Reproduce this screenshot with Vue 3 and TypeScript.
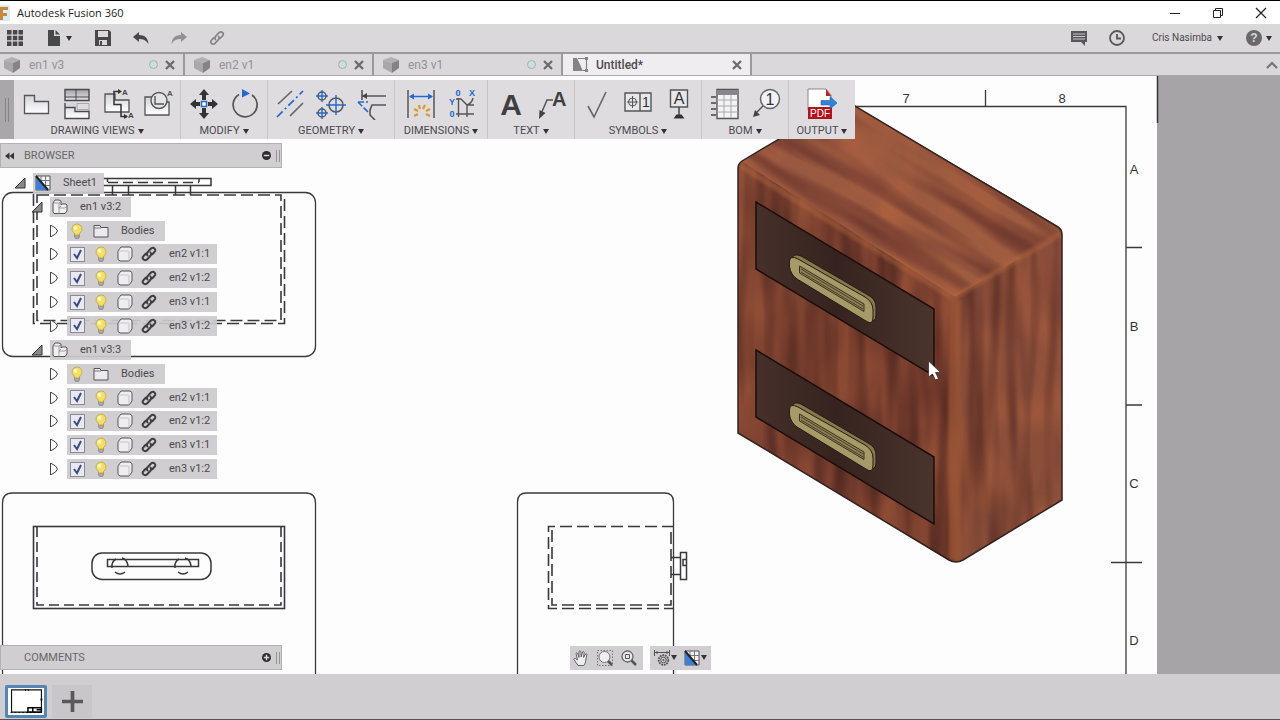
<script setup lang="ts">
import { ref } from 'vue'

interface DocTab { title: string; active: boolean; icon: string }
interface ToolGroup { label: string; tools: { icon: string; name: string }[] }
interface Row { kind: 'sheet' | 'view' | 'bodies' | 'part'; label: string; shown: boolean }

const tabs: DocTab[] = [
  { title: 'en1 v3', active: false, icon: 'cube' },
  { title: 'en2 v1', active: false, icon: 'cube' },
  { title: 'en3 v1', active: false, icon: 'cube' },
  { title: 'Untitled*', active: true, icon: 'drawing' },
]

const groups: ToolGroup[] = [
  { label: 'DRAWING VIEWS', tools: [
    { icon: 'base', name: 'Base view' }, { icon: 'projected', name: 'Projected view' },
    { icon: 'section', name: 'Section view' }, { icon: 'detail', name: 'Detail view' }] },
  { label: 'MODIFY', tools: [{ icon: 'move', name: 'Move' }, { icon: 'rotate', name: 'Rotate' }] },
  { label: 'GEOMETRY', tools: [
    { icon: 'centerline', name: 'Centerline' }, { icon: 'centermark', name: 'Center mark' },
    { icon: 'extension', name: 'Edge extension' }] },
  { label: 'DIMENSIONS', tools: [{ icon: 'dimension', name: 'Dimension' }, { icon: 'ordinate', name: 'Ordinate' }] },
  { label: 'TEXT', tools: [{ icon: 'text', name: 'Text' }, { icon: 'leader', name: 'Leader' }] },
  { label: 'SYMBOLS', tools: [
    { icon: 'surface', name: 'Surface texture' }, { icon: 'control', name: 'Feature control frame' },
    { icon: 'datum', name: 'Datum identifier' }] },
  { label: 'BOM', tools: [{ icon: 'table', name: 'Parts list' }, { icon: 'balloon', name: 'Balloon' }] },
  { label: 'OUTPUT', tools: [{ icon: 'pdf', name: 'Output PDF' }] },
]

const part = (label: string): Row => ({ kind: 'part', label, shown: true })
const viewRows = (label: string): Row[] => [
  { kind: 'view', label, shown: true },
  { kind: 'bodies', label: 'Bodies', shown: true },
  part('en2 v1:1'), part('en2 v1:2'), part('en3 v1:1'), part('en3 v1:2'),
]
const rows = ref<Row[]>([
  { kind: 'sheet', label: 'Sheet1', shown: true },
  ...viewRows('en1 v3:2'),
  ...viewRows('en1 v3:3'),
])
const rowIcons: Record<Row['kind'], string[]> = {
  sheet: ['sheet'],
  view: ['component'],
  bodies: ['bulb', 'folder'],
  part: ['bulb', 'body', 'chain'],
}
const zoneLetters = ['A', 'B', 'C', 'D']
</script>

<template>
  <div class="app">
    <svg class="defs" aria-hidden="true">
      <symbol id="i-cube" viewBox="0 0 16 16"><path d="M0 3L8 0l8 3-7 3z" fill="#b2b0b2" /><path d="M0 3l9 3v10L0 11z" fill="#a9a7a9" /><path d="M16 3v8l-7 5V6z" fill="#858386" /></symbol>
      <symbol id="i-drawing" viewBox="0 0 16 16"><path d="M1 1h4l6 13H1z" fill="#858386" /><path d="M6 1.500h8.500v12H11" fill="none" stroke="#858386" stroke-width="1.200" /><path d="M13 0h3v3h-3zM13 12h3v3h-3z" fill="#858386" /></symbol>
      <symbol id="i-base" viewBox="0 0 32 32"><path d="M4.500 7.500h10v6h14v12h-24z" fill="url(#metal)" stroke="#555" stroke-width="1.300" /></symbol>
      <symbol id="i-projected" viewBox="0 0 32 32"><path d="M4 1.500h24v11H4z" fill="url(#metalDark)" stroke="#4a494c" stroke-width="1.400" /><path d="M15 1v12M4 9h24" stroke="#4a494c" /><path d="M4 15.500h24v15H4z" fill="url(#metal)" /><path d="M4 15v15.500h24V22.500M4 19.500h10v4h14" fill="none" stroke="#4a494c" stroke-width="1.400" /><path d="M16 15.500h12v6H16z" fill="#dedcdf" stroke="#aaa" /></symbol>
      <symbol id="i-section" viewBox="0 0 32 32"><path d="M3 6h10v6h14v12H3z" fill="url(#metal)" stroke="#555" stroke-width="1.300" /><path d="M17 3.500h-5v13h7v12h6" fill="none" stroke="#333" stroke-width="1.500" /><path d="M16 1l4 2.500-4 2.500zM22 26l4 2.500-4 2.500z" fill="#333" /><text x="20" y="7" font-size="8" font-weight="bold" fill="#444">A</text><text x="26" y="30" font-size="8" font-weight="bold" fill="#444">A</text></symbol>
      <symbol id="i-detail" viewBox="0 0 32 32"><path d="M2 9h10v5h14v13H2z" fill="url(#metal)" stroke="#555" stroke-width="1.300" /><circle cx="16" cy="12.500" r="8" fill="#e4e3e6" stroke="#555" stroke-width="1.400" /><path d="M12 8v8h9" fill="none" stroke="#555" stroke-width="1.400" /><text x="24" y="8" font-size="8" font-weight="bold" fill="#555">A</text></symbol>
      <symbol id="i-move" viewBox="0 0 32 32"><path d="M16 1l5 6h-3v5h-4V7h-3zM16 31l-5-6h3v-5h4v5h3zM2 16l6-5v3h4v4H8v3zM30 16l-6 5v-3h-4v-4h4v-3z" fill="#333" /><path d="M13.500 13.500h5v5h-5z" fill="#fff" stroke="#2a6bc4" stroke-width="1.600" /></symbol>
      <symbol id="i-rotate" viewBox="0 0 32 32"><path d="M10 6.500A12 12 0 1 0 23 7" fill="none" stroke="#555" stroke-width="1.700" /><path d="M13 1l8 4.500-8 4z" fill="#2468cf" /></symbol>
      <symbol id="i-centerline" viewBox="0 0 32 32"><path d="M4 16L18 3M16 28l13-13" stroke="#666" stroke-width="1.700" /><path d="M3 29L29 3" stroke="#2468cf" stroke-width="1.700" stroke-dasharray="8 3 2 3" /></symbol>
      <symbol id="i-centermark" viewBox="0 0 32 32"><g fill="none" stroke="#555" stroke-width="1.500"><circle cx="7" cy="8" r="4" /><circle cx="7" cy="25" r="4" /><circle cx="21" cy="17" r="7" /></g><path d="M7 2v12M1 8h12M7 19v12M1 25h12M21 7v20M11 17h20" stroke="#2468cf" stroke-width="1.400" /></symbol>
      <symbol id="i-extension" viewBox="0 0 32 32"><path d="M6 2v10M6 8h24M30 17H16l-2 5v5l5 5" fill="none" stroke="#555" stroke-width="1.600" /><path d="M11 5v6L6 8z" fill="#444" /><path d="M2 14l10 10M2 14h10" fill="none" stroke="#2468cf" stroke-width="1.600" stroke-dasharray="6 2" /></symbol>
      <symbol id="i-dimension" viewBox="0 0 32 32"><path d="M3 2v28M29 2v28" stroke="#555" stroke-width="1.500" /><path d="M5 8.500h22" stroke="#2468cf" stroke-width="1.500" /><path d="M4 8.500l5-3v6zM28 8.500l-5-3v6z" fill="#2468cf" /><path d="M9 28l4-2M9 21l4 2M14 17l1 4M20 17l-2 4M25 21l-4 2M25 28l-4-2" stroke="#d99a2b" stroke-width="2.200" /></symbol>
      <symbol id="i-ordinate" viewBox="0 0 32 32"><path d="M12.500 10v19M10 26h18M10 11h5l6 6h7M27 10q-1 5-6 7v12" fill="none" stroke="#555" stroke-width="1.400" /><g font-size="9" font-weight="bold" fill="#2468cf" text-anchor="middle"><text x="12" y="8">0</text><text x="26" y="8">X</text><text x="6" y="17">Y</text><text x="6" y="29">0</text></g></symbol>
      <symbol id="i-text" viewBox="0 0 32 32"><text x="16" y="27" font-size="30" font-weight="bold" text-anchor="middle" fill="#3f3e41">A</text></symbol>
      <symbol id="i-leader" viewBox="0 0 32 32"><text x="16" y="18" font-size="20" font-weight="bold" fill="#3f3e41">A</text><path d="M17 12h-6L5 26" fill="none" stroke="#555" stroke-width="1.500" /><path d="M3 31l.5-9 6 3z" fill="#444" /></symbol>
      <symbol id="i-surface" viewBox="0 0 32 32"><path d="M7 18l6 11L25 4" fill="none" stroke="#666" stroke-width="1.600" /></symbol>
      <symbol id="i-control" viewBox="0 0 32 32"><path d="M3 5h26v18H3zM18 5v18" fill="#e8e7e9" stroke="#555" stroke-width="1.400" /><circle cx="10.500" cy="14" r="4" fill="none" stroke="#555" /><path d="M5 14h11M10.500 8v12" stroke="#555" /><text x="20" y="19" font-size="14" fill="#333">1</text></symbol>
      <symbol id="i-datum" viewBox="0 0 32 32"><path d="M7.500 2h17v17h-17z" fill="#e8e7e9" stroke="#555" stroke-width="1.400" /><text x="16" y="16" font-size="16" text-anchor="middle" fill="#333">A</text><path d="M16 19v8" stroke="#444" stroke-width="1.500" /><path d="M10.500 30.500l3-4h5l3 4z" fill="#333" /></symbol>
      <symbol id="i-table" viewBox="0 0 32 32"><path d="M8 1.500h21v29H8z" fill="#f4f3f5" stroke="#555" stroke-width="1.400" /><path d="M8 2h21v5H8z" fill="#88868c" /><path d="M15 7v23M22 7v23M8 12h21M8 18h21M8 24h21" stroke="#aaa8b0" /><path d="M2 9h5M2 15h5M2 21h5M2 27h5" stroke="#444" stroke-width="1.400" /></symbol>
      <symbol id="i-balloon" viewBox="0 0 32 32"><circle cx="20" cy="11" r="9.500" fill="#f2f1f3" stroke="#666" stroke-width="1.500" /><text x="20" y="17" font-size="16" text-anchor="middle" fill="#333">1</text><path d="M13 18l-7 7" stroke="#555" stroke-width="1.500" /><path d="M3 29l2-7 5 5z" fill="#444" /></symbol>
      <symbol id="i-pdf" viewBox="0 0 32 32"><path d="M2 1h18l5 6v15H2z" fill="#fff" stroke="#888" /><path d="M20 1l5 7h-5z" fill="#b8202a" /><path d="M2 19h24v12H2z" fill="#b5121b" /><path d="M15 12.500h9V8.500l7 6.500-7 6v-4h-9z" fill="#2e84dc" stroke="#1c5ea8" stroke-width=".6" /><text x="14" y="29" font-size="10" text-anchor="middle" fill="#fff">PDF</text></symbol>
      <symbol id="i-sheet" viewBox="0 0 16 16"><path d="M1 1h14v14H1z" fill="#f3f3f5" stroke="#555" /><path d="M6 1v14M10.500 1v14M1 5.500h14M1 10.500h14" stroke="#777" /><path d="M1 1l12 14H1z" fill="#3b7fd6" /><path d="M1 1l12 14" stroke="#222" stroke-width="2" /></symbol>
      <symbol id="i-component" viewBox="0 0 16 16"><path d="M1 4l2-3h4l2 1v4l1-1h4l1 1v6l-2 2.500H2L1 13z" fill="#f0eff1" stroke="#555" stroke-linejoin="round" /><path d="M7 15V9l2-2M1.500 4H7l2-2M7 4v5h6l2-2" fill="none" stroke="#8b898d" stroke-width=".8" /></symbol>
      <symbol id="i-bulb" viewBox="0 0 16 16"><path d="M5.500 10h5v4l-1.500 2H7l-1.500-2z" fill="#aaa7a2" stroke="#777" stroke-width=".6" /><path d="M8 1a5 5 0 0 0-3 9l1 2h4l1-2a5 5 0 0 0-3-9z" fill="#f4df62" stroke="#b19c3c" stroke-width=".7" /><circle cx="6.500" cy="5" r="2" fill="#fff8bd" /></symbol>
      <symbol id="i-folder" viewBox="0 0 16 16"><path d="M1 14V2.500h6l1 2h7V14z" fill="#eceaee" stroke="#555" /><path d="M1 5h7" stroke="#777" /></symbol>
      <symbol id="i-body" viewBox="0 0 16 16"><path d="M1 5l3-4h9l2 1.500V11l-3 4H3l-2-1.500z" fill="#efedf1" stroke="#555" /><path d="M1.500 5H11q1 0 1 1v8.500" fill="none" stroke="#c5c3c8" /></symbol>
      <symbol id="i-chain" viewBox="0 0 16 16"><g fill="none" stroke="#3f3e41" stroke-width="2" stroke-linecap="round"><path d="M6.500 9.500Q5 7.500 7 5.800L10 2.600Q12 1 13.600 2.600T13.400 6L11.300 8.200" /><path d="M9.500 6.500Q11 8.500 9 10.200L6 13.400Q4 15 2.400 13.400T2.600 10L4.700 7.800" /></g></symbol>
      <symbol id="i-link" viewBox="0 0 16 16"><g fill="none" stroke="#858386" stroke-width="1.700" stroke-linecap="round"><path d="M6.500 9.500Q5 7.500 7 5.800L10 2.600Q12 1 13.600 2.600T13.400 6L11.300 8.200" /><path d="M9.500 6.500Q11 8.500 9 10.200L6 13.400Q4 15 2.400 13.400T2.600 10L4.700 7.800" /></g></symbol>
      <symbol id="i-apps" viewBox="0 0 16 16"><path d="M0 0h4.500v4.500H0zM5.800 0h4.500v4.500H5.800zM11.500 0H16v4.500h-4.500zM0 5.800h4.500v4.500H0zM5.800 5.800h4.500v4.500H5.800zM11.500 5.800H16v4.500h-4.500zM0 11.500h4.500V16H0zM5.800 11.500h4.500V16H5.800zM11.500 11.500H16V16h-4.500z" fill="#48474a" /></symbol>
      <symbol id="i-file" viewBox="0 0 16 16"><path d="M2 0h6v6h6v10H2zM9.500 0L14 4.500H9.500z" fill="#48474a" /></symbol>
      <symbol id="i-save" viewBox="0 0 16 16"><path d="M0 0h14l2 2v14H0z" fill="#48474a" /><path d="M3 1h10v6H3zM4 10h8v5H4z" fill="#dad8db" /><path d="M5 11h2v4H5z" fill="#48474a" /></symbol>
      <symbol id="i-undo" viewBox="0 0 16 16"><path d="M0 7l6-5v3c7 0 9 4 9.500 9C13 10 10 9 6 9v3z" fill="#48474a" /></symbol>
      <symbol id="i-redo" viewBox="0 0 16 16"><path d="M16 7l-6-5v3C3 5 1 9 .5 14 3 10 6 9 10 9v3z" fill="#929094" /></symbol>
      <symbol id="i-comment" viewBox="0 0 16 16"><path d="M0 1h16v11h-2v4l-4-4H0z" fill="#59575b" /><path d="M2 4h12M2 6.500h12M2 9h12" stroke="#c9c7ca" /></symbol>
      <symbol id="i-clock" viewBox="0 0 16 16"><circle cx="8" cy="8" r="7" fill="none" stroke="#59575b" stroke-width="1.800" /><path d="M8 4v4.500h4" fill="none" stroke="#59575b" stroke-width="1.800" /></symbol>
      <symbol id="i-help" viewBox="0 0 16 16"><circle cx="8" cy="8" r="8" fill="#6a686c" /><text x="8" y="12" font-size="12" font-weight="bold" text-anchor="middle" fill="#dad8db">?</text></symbol>
      <symbol id="i-pan" viewBox="0 0 16 16"><path d="M5 15.500L1 9.500q0-1.500 1.500-1L4.500 10 3 3.500q.8-1.500 1.700 0L6 7.500 6 1.500q1-1.500 1.800 0L8.200 7 9.500 2q1.200-1 1.600.3L10.600 7.500 12.500 4q1.300-.7 1.400.5L12.800 10q0 3-2 5.500z" fill="#eeedef" stroke="#555" stroke-width=".9" /></symbol>
      <symbol id="i-zoomwin" viewBox="0 0 16 16"><path d="M.5.500h15v15H.5z" fill="none" stroke="#777" stroke-dasharray="1.500 1.500" /><circle cx="7.500" cy="7" r="5.500" fill="#efeef0" stroke="#777" /><path d="M11 11l4 4" stroke="#555" stroke-width="2.500" /></symbol>
      <symbol id="i-zoomfit" viewBox="0 0 16 16"><circle cx="6.500" cy="6.500" r="5.500" fill="#e8e7e9" stroke="#666" stroke-width="1.300" /><path d="M4.500 4.500h4v4h-4z" fill="none" stroke="#555" /><path d="M10.500 10.500l4.500 4.500" stroke="#555" stroke-width="2.500" /></symbol>
      <symbol id="i-settings" viewBox="0 0 16 16"><path d="M.5 0v6M15.500 0v6M1 2.500h14M3 1v3M13 1v3" fill="none" stroke="#555" /><circle cx="9.500" cy="10" r="4.800" fill="#d0ced0" stroke="#555" stroke-width="1.800" stroke-dasharray="1.800 .8" /><circle cx="9.500" cy="10" r="2.800" fill="none" stroke="#555" /><circle cx="9.500" cy="10" r="1" fill="#555" /></symbol>
    </svg>

    <header class="titlebar">
      <svg class="brand" viewBox="0 0 10 16" aria-hidden="true"><path d="M0 0h10v16H0z" fill="#dcecf5" /><path d="M0 2h8v3H3v3h4v3H3v4H0z" fill="#c8873c" /></svg>
      <h1>Autodesk Fusion 360</h1>
      <div class="window-buttons">
        <button aria-label="Minimize"><svg viewBox="0 0 12 12"><path d="M1 6.500h10" stroke="#222" /></svg></button>
        <button aria-label="Restore"><svg viewBox="0 0 12 12"><path d="M1.500 3.500h7v7h-7zM3.500 3V1.500h7v7H9" fill="none" stroke="#222" /></svg></button>
        <button aria-label="Close"><svg viewBox="0 0 12 12"><path d="M1 1l10 10M11 1L1 11" stroke="#222" stroke-width="1.200" /></svg></button>
      </div>
    </header>

    <nav class="quickbar" aria-label="Quick access">
      <button aria-label="Data panel"><svg><use href="#i-apps" /></svg></button>
      <button class="file" aria-label="File"><svg><use href="#i-file" /></svg><i class="caret"></i></button>
      <button aria-label="Save"><svg><use href="#i-save" /></svg></button>
      <button aria-label="Undo"><svg><use href="#i-undo" /></svg></button>
      <button aria-label="Redo"><svg><use href="#i-redo" /></svg></button>
      <button aria-label="Link"><svg><use href="#i-link" /></svg></button>
      <div class="account">
        <button aria-label="Comments"><svg><use href="#i-comment" /></svg></button>
        <button aria-label="Job status"><svg><use href="#i-clock" /></svg></button>
        <button class="user">Cris Nasimba<i class="caret"></i></button>
        <button class="help" aria-label="Help"><svg><use href="#i-help" /></svg><i class="caret"></i></button>
      </div>
    </nav>

    <nav class="tabs" aria-label="Documents">
      <div v-for="t in tabs" :key="t.title" class="tab" :class="{ active: t.active }">
        <button class="tab-name"><svg><use :href="'#i-' + t.icon" /></svg>{{ t.title }}</button>
        <i v-if="!t.active" class="ring"></i>
        <button class="close" :aria-label="'Close ' + t.title"><svg viewBox="0 0 10 10"><path d="M1 1l8 8M9 1L1 9" stroke="#6d6b6f" stroke-width="2.400" /></svg></button>
      </div>
      <button class="collapse" aria-label="Collapse toolbar"><svg viewBox="0 0 12 8"><path d="M1 7l5-5 5 5" fill="none" stroke="#77757a" stroke-width="2.200" /></svg></button>
    </nav>

    <main class="workspace">
      <svg class="drawing" viewBox="0 76 1280 598" preserveAspectRatio="xMinYMin slice" aria-label="Drawing sheet">
        <defs>
          <linearGradient id="metal" x1="0" y1="0" x2="0" y2="1"><stop offset="0" stop-color="#d3d2da" /><stop offset="1" stop-color="#fff" /></linearGradient>
          <linearGradient id="metalDark" x1="0" y1="0" x2="0" y2="1"><stop offset="0" stop-color="#a3a2ab" /><stop offset="1" stop-color="#e7e6ea" /></linearGradient>
          <filter id="grainV" x="0" y="0" width="1" height="1" color-interpolation-filters="sRGB"><feTurbulence type="fractalNoise" baseFrequency=".06 .006" numOctaves="2" seed="8" /><feColorMatrix values="0 0 0 0 .26  0 0 0 0 .12  0 0 0 0 .11  1.700 0 0 0 -.65" /></filter>
          <filter id="grainT" x="0" y="0" width="1" height="1" color-interpolation-filters="sRGB"><feTurbulence type="fractalNoise" baseFrequency=".006 .06" numOctaves="2" seed="4" /><feColorMatrix values="0 0 0 0 .38  0 0 0 0 .18  0 0 0 0 .16  1.700 0 0 0 -.65" /></filter>
          <filter id="cloud" x="0" y="0" width="1" height="1" color-interpolation-filters="sRGB"><feTurbulence type="fractalNoise" baseFrequency=".024 .014" numOctaves="2" seed="21" /><feColorMatrix values="0 0 0 0 .7  0 0 0 0 .39  0 0 0 0 .25  0 2.200 0 0 -.85" /></filter>
          <linearGradient id="front" x1="0" y1="0" x2="1" y2="1"><stop offset="0" stop-color="#8c4c36" /><stop offset=".5" stop-color="#783e2e" /><stop offset="1" stop-color="#844632" /></linearGradient>
          <linearGradient id="top" x1="0" y1="0" x2="1" y2="1"><stop offset="0" stop-color="#975640" /><stop offset="1" stop-color="#a05e40" /></linearGradient>
          <linearGradient id="side" x1="0" y1="0" x2="0" y2="1"><stop offset="0" stop-color="#8a4d3b" /><stop offset="1" stop-color="#8b4f39" /></linearGradient>
          <linearGradient id="drawerFill"><stop offset="0" stop-color="#45302a" /><stop offset=".45" stop-color="#36231f" /><stop offset="1" stop-color="#4a342d" /></linearGradient>
          <filter id="soft"><feGaussianBlur stdDeviation="1.500" /></filter>
          <clipPath id="cFront"><path d="M738 168q0-6 6-5L955 297v265q-4 0-8-3L738 433z" /></clipPath>
          <clipPath id="cTop"><path d="M740 163L845 100 1058 226q6 4 3 8L962 297q-6 4-12 0z" /></clipPath>
          <clipPath id="cSide"><path d="M955 297L1062 233v267L963 560q-4 2-8 2z" /></clipPath>
          <g id="handle">
            <path d="M792 258L792 264Q794 272 800 276L868 320Q876 323 876 315L876 307Q876 299 868 295L801 256Q794 253 792 258z" fill="#86784c" stroke="#241b12" />
            <path d="M789.500 261L789.500 267Q791 275 797 279L866 321Q873 326 873 317L873 310Q873 302 865 297L798 259Q790 255 789.500 261z" fill="#a59a68" stroke="#241b12" />
            <path d="M799.500 266L864 304V311.500L799.500 273z" fill="#8d8256" stroke="#3b301e" />
            <path d="M801 269L863 306M801 272L863 309" stroke="#4a3e28" />
          </g>
          <path id="drawer" d="M756 202L934 309V376L756 269z" />
        </defs>

        <rect x="0" y="76" width="1157" height="598" fill="#fefdfe" />
        <path d="M1157.500 76v47" stroke="#333" stroke-width="1.500" />
        <g fill="none" stroke="#3a393b" stroke-width="1.300">
          <path d="M855 106.500h271V674M985.500 90v16M1126 247.500h16M1126 405h16M1111 562.500h31" />
        </g>
        <g class="zones">
          <text x="906" y="103">7</text><text x="1062" y="103">8</text>
          <text v-for="(z, i) in zoneLetters" :key="z" x="1134" :y="174 + i * 157">{{ z }}</text>
        </g>

        <g fill="none" stroke="#39383a" stroke-width="1.300">
          <rect x="2.500" y="192.500" width="313" height="164" rx="10" />
          <path d="M2.500 674V503q0-10 10-10h293q10 0 10 10v171M517.500 674V502q0-9 9-9h138q9 0 9 9v172" />
          <path d="M103 178.500h108v7H103M112.500 186v9M128.500 186v9M175.500 186v9M190.500 186v9" stroke-width="1.500" />
          <path d="M107.500 178v4M199 178v4M108 182.500h91" stroke-dasharray="10 5" stroke-width="1.500" />
          <g stroke-width="1.600" stroke-dasharray="12 5">
            <path d="M33.500 194v129.500h251V194M37 195h244v125.500H37z" />
            <path d="M37 527v78h244v-78" stroke-dasharray="10 5" />
            <path d="M674 526.500H548.500v82H674M552 530v75h119V527" />
          </g>
          <rect x="33.500" y="526.500" width="251" height="82" stroke-width="1.600" />
          <rect x="92" y="553" width="119" height="26.500" rx="10" stroke-width="1.500" />
          <path d="M107.500 559.500h91v7h-91zM671 557.500h9M671 574.500h9M680.500 552.500h6v27h-6zM686 559.500h-3v6h3" stroke-width="1.500" />
          <path v-for="x in [120, 183]" :key="x" :d="`M${x - 8} 568q-1-6 4-9M${x + 2} 558q5 1 6 8M${x - 5} 572q5 4 10 0`" stroke-width="1.500" />
        </g>

        <g clip-path="url(#cTop)"><rect x="730" y="90" width="340" height="215" fill="url(#top)" /><rect x="730" y="90" width="340" height="215" filter="url(#cloud)" opacity=".7" /><g transform="rotate(31 740 90)"><rect x="640" y="-80" width="520" height="440" filter="url(#grainT)" /></g></g>
        <g clip-path="url(#cFront)"><rect x="738" y="155" width="217" height="410" fill="url(#front)" /><rect x="738" y="155" width="217" height="410" filter="url(#cloud)" opacity=".6" /><rect x="738" y="155" width="217" height="410" filter="url(#grainV)" /></g>
        <g clip-path="url(#cSide)"><rect x="950" y="225" width="115" height="340" fill="url(#side)" /><rect x="950" y="225" width="115" height="340" filter="url(#cloud)" opacity=".7" /><rect x="950" y="225" width="115" height="340" filter="url(#grainV)" /></g>
        <path d="M741 166L953 298L1060 234" fill="none" stroke="#b3673f" stroke-width="6" opacity=".45" filter="url(#soft)" />
        <path d="M949 300h12v257q-6 5-12 1z" fill="#9c5736" opacity=".7" filter="url(#soft)" />
        <path d="M738 168q0-4 4-7L845 100 1058 227q4 3 4 7v266L963 560q-7 4-14 0L738 433z" fill="none" stroke="#302220" stroke-width="1.500" />
        <g stroke="#1d0d0a" stroke-width="1.500" fill="url(#drawerFill)"><use href="#drawer" /><use href="#drawer" transform="translate(0 148)" /></g>
        <use href="#handle" /><use href="#handle" transform="translate(0 148)" />
        <path d="M928.500 361v16l4-3 3 6 3-1.500-3-6h5z" fill="#fff" stroke="#333" stroke-width=".8" />
      </svg>

      <section class="toolbar" aria-label="Tools">
        <div class="grip"></div>
        <div v-for="g in groups" :key="g.label" class="group">
          <div class="tools">
            <button v-for="tool in g.tools" :key="tool.icon" :aria-label="tool.name"><svg><use :href="'#i-' + tool.icon" /></svg></button>
          </div>
          <button class="group-label">{{ g.label }}<i class="caret"></i></button>
        </div>
      </section>

      <section class="panel browser-head">
        <button class="rewind" aria-label="Hide browser"><svg viewBox="0 0 10 8"><path d="M5 0v8L0 4zM10 0v8L5 4z" fill="#333" /></svg></button>
        <h2>BROWSER</h2>
        <button class="toggle" aria-label="Collapse browser"><svg viewBox="0 0 10 10"><circle cx="5" cy="5" r="5" fill="#2d2c2e" /><path d="M2 5h6" stroke="#ddd" stroke-width="1.600" /></svg></button>
        <i class="bars"></i>
      </section>

      <ul class="tree">
        <li v-for="(r, i) in rows" :key="i" :class="r.kind">
          <button class="expander" :aria-label="'Expand ' + r.label">
            <svg v-if="r.kind === 'sheet' || r.kind === 'view'" viewBox="0 0 12 12"><path d="M11 1v10H1z" fill="#8b898c" stroke="#333" /></svg>
            <svg v-else viewBox="0 0 12 12"><path d="M2.500 0v12Q9 9 9.500 6 9 3 2.500 0z" fill="#fbfafb" stroke="#444" /></svg>
          </button>
          <label class="chip">
            <span v-if="r.kind === 'part'" class="cell"><input v-model="r.shown" type="checkbox" /></span>
            <span v-for="ic in rowIcons[r.kind]" :key="ic" class="cell"><svg><use :href="'#i-' + ic" /></svg></span>
            <span class="name">{{ r.label }}</span>
          </label>
        </li>
      </ul>

      <div class="foot">
        <section class="panel">
          <h2>COMMENTS</h2>
          <button class="toggle" aria-label="Add comment"><svg viewBox="0 0 10 10"><circle cx="5" cy="5" r="5" fill="#2d2c2e" /><path d="M2 5h6M5 2v6" stroke="#ddd" stroke-width="1.600" /></svg></button>
          <i class="bars"></i>
        </section>
        <div class="viewbar">
          <button aria-label="Pan"><svg><use href="#i-pan" /></svg></button>
          <button aria-label="Zoom window"><svg><use href="#i-zoomwin" /></svg></button>
          <button aria-label="Fit"><svg><use href="#i-zoomfit" /></svg></button>
        </div>
        <div class="viewbar settings">
          <button aria-label="Annotation settings"><svg><use href="#i-settings" /></svg><i class="caret"></i></button>
          <button aria-label="Sheet settings"><svg><use href="#i-sheet" /></svg><i class="caret"></i></button>
        </div>
      </div>
    </main>

    <footer class="sheets">
      <button class="thumb" aria-label="Sheet1"><svg viewBox="0 0 34 28"><path d="M0 0h34v28H0z" fill="#fff" /><path d="M2 2h31v23H2z" fill="none" stroke="#111" stroke-width="1.200" /><path d="M1 25.500h32" stroke="#111" stroke-dasharray="2 2" /><path d="M19 20.500h14v4.500H19zM24 20.500v4.500M28 22.500h5" fill="none" stroke="#000" stroke-width="1.500" /><path d="M16 2h1M19 2h1M32 12h2" stroke="#111" stroke-width="2" /></svg></button>
      <button class="add" aria-label="Add sheet"><svg viewBox="0 0 20 20"><path d="M0 10h20M10 0v20" stroke="#59585b" stroke-width="3.500" /></svg></button>
    </footer>
  </div>
</template>

<style>
body { margin: 0; }
</style>

<style scoped>
* { box-sizing: border-box; }
.app {
  display: flex; flex-direction: column; height: 100vh; overflow: hidden;
  border-top: 1px solid #000; border-bottom: 1px solid #555357;
  font: 11px/16px Roboto, "Liberation Sans", sans-serif; color: #4c4a4e; background: #d0ced0;
}
.defs { display: none; }
button { display: flex; align-items: center; justify-content: center; padding: 0; border: 0; background: none; font: inherit; color: inherit; }
button svg, .cell svg { display: block; width: 16px; height: 16px; }
symbol text { font-family: "Liberation Sans", sans-serif; }
h1, h2 { margin: 0; font-weight: normal; }
.caret { flex: none; border: 3px solid transparent; border-top: 5px solid #333; border-bottom: 0; }

.titlebar { display: flex; align-items: center; flex: none; height: 23px; background: #fff; }
.brand { width: 10px; height: 16px; }
h1 { margin-left: 7px; font: 11px/18px "Open Sans", sans-serif; color: #222; }
.window-buttons { display: flex; gap: 5px; margin-left: auto; }
.window-buttons button { width: 38px; }
.window-buttons svg { width: 12px; height: 12px; }

.quickbar { display: flex; align-items: center; flex: none; gap: 22px; height: 30px; padding: 0 7px; background: #dad8db; border-bottom: 2px solid #9b999c; }
.file { gap: 4px; margin-left: 1px; margin-right: 1px; }
.account { display: flex; align-items: center; gap: 22px; margin-left: auto; }
.user { gap: 5px; margin-left: 5px; margin-right: 1px; font-size: 10px; }
.help { gap: 4px; margin-right: 1px; }

.tabs { display: flex; flex: none; height: 22px; background: #dad8db; border-bottom: 1px solid #aaa8ab; }
.tab { display: flex; align-items: center; width: 189px; padding: 0 8px 0 9px; border-right: 2px solid #9b999c; color: #949295; }
.tab:first-child { width: 185px; padding-left: 4px; }
.tab-name { gap: 9px; margin-right: auto; font-size: 12px; }
.tab.active { background: #efedf0; color: #4c4a4e; }
.active .tab-name { gap: 8px; font-weight: 500; }
.ring { width: 9px; height: 9px; margin-right: 7px; border: 1px solid #83bfb4; border-radius: 50%; }
.close svg { width: 10px; height: 10px; }
.collapse { margin-left: auto; padding-right: 2px; }
.collapse svg { width: 12px; height: 8px; }

.workspace { position: relative; display: flex; flex-direction: column; flex: 1; min-height: 0; background: #a6a4a7; }
.drawing { position: absolute; inset: 0; width: 100%; height: 100%; }
.zones text { font: 13px "Liberation Sans", sans-serif; text-anchor: middle; fill: #333; }
.toolbar, .panel, .tree, .foot { position: relative; }

.toolbar { display: grid; grid-template-columns: 14px 167px 87px 127px 93px 87px 127px 87px 66px; width: max-content; height: 59px; margin-top: 4px; background: #dedcdf; }
.grip { background: #a9a7aa; background-image: linear-gradient(90deg, transparent 5px, #858387 5px, #858387 6px, transparent 6px, transparent 8px, #858387 8px, #858387 9px, transparent 9px); background-size: 100% 24px; background-repeat: no-repeat; background-position: 0 center; }
.group { display: flex; flex-direction: column; align-items: center; gap: 3px; padding-top: 8px; border-right: 1px solid #c6c4c8; }
.group:last-child { border: 0; }
.tools { display: flex; gap: 9px; }
.tools svg { width: 32px; height: 32px; }
.group-label { gap: 3px; white-space: nowrap; }

.panel { display: flex; align-items: center; width: 282px; height: 25px; padding: 0 1px 0 4px; background: #d0ced0; border: 1px solid #b3b1b4; }
.panel h2 { font-size: 11px; line-height: 16px; color: #68666a; margin-left: 19px; margin-right: auto; }
.browser-head { margin-top: 4px; }
.rewind svg { width: 9px; height: 8px; }
.browser-head h2 { margin-left: 10px; }
.toggle svg { width: 9px; height: 9px; }
.bars { width: 4px; height: 12px; margin-left: 5px; border: solid #969497; border-width: 0 1px; }

.tree { display: grid; grid-auto-rows: 1fr; height: 310px; margin: 3px 0 0; padding: 0; list-style: none; }
.tree li { display: flex; align-items: center; }
.expander { width: 12px; margin-right: 7px; }
.expander svg { width: 12px; height: 12px; }
.sheet { padding-left: 14px; }
.view { padding-left: 31px; }
.bodies, .part { padding-left: 48px; }
.chip { display: flex; align-items: center; gap: 4px; height: 20px; padding-right: 7px; background: rgba(204, 202, 204, .92); }
.view .chip, .bodies .chip { padding-right: 10px; }
.cell { display: flex; justify-content: center; width: 20px; }
.name { margin-left: 6px; }
input { appearance: none; width: 15px; height: 15px; margin: 0; background: #e9e9f1; border: 1px solid #8b8993; }
input:checked { background: #e9e9f1 url("data:image/svg+xml,%3Csvg xmlns='http://www.w3.org/2000/svg' viewBox='0 0 13 13'%3E%3Cpath d='M3 6l3 4 4-8' fill='none' stroke='%233c4a83' stroke-width='2'/%3E%3C/svg%3E"); }

.foot { display: flex; align-items: center; margin-top: auto; margin-bottom: 4px; }
.viewbar { display: flex; align-items: center; gap: 8px; height: 24px; margin-left: 288px; padding: 0 6px 0 3px; background: #d0ced0; }
.viewbar.settings { margin-left: 7px; padding: 0 4px; gap: 7px; }
.viewbar button { gap: 1px; }

.sheets { display: flex; flex: none; align-items: flex-end; height: 45px; padding: 0 5px 1px; gap: 5px; background: #d0ced0; }
.thumb { width: 42px; height: 33px; background: #fff; border: 3px solid #5686b5; border-radius: 2px; }
.thumb svg { width: 36px; height: 27px; }
.add { width: 40px; height: 33px; background: #c8c6c9; }
.add svg { width: 21px; height: 21px; }
</style>
